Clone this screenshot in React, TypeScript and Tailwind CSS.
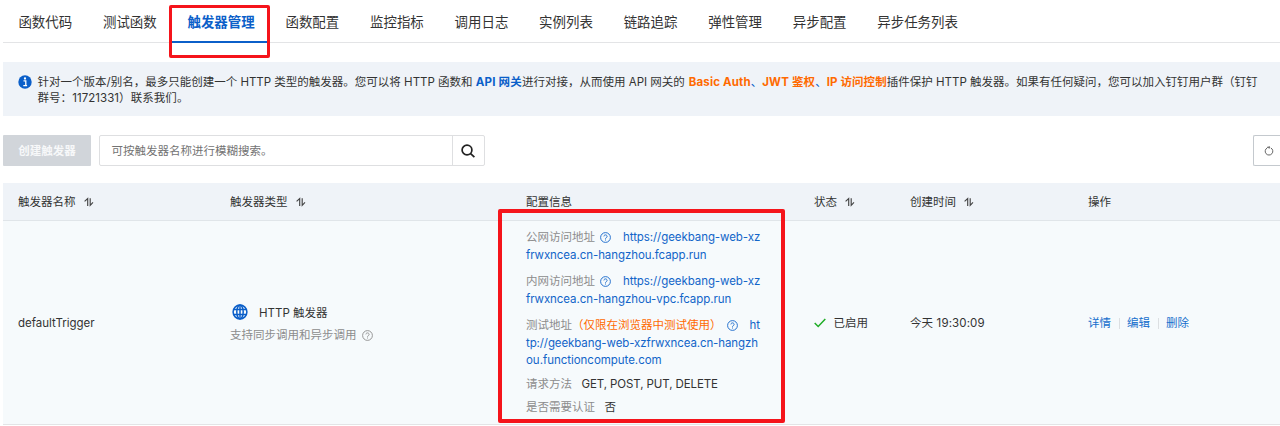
import type { ReactNode } from "react";

function Sort() {
  return (
    <svg width="10" height="10" viewBox="0 0 10 10" className="mb-px ml-[8px] shrink-0" fill="none" stroke="#444" strokeWidth="1.15">
      <path d="M0.6 4.4 3.7 1.6V9M6.2 1.2V8.4L9 5.4" />
    </svg>
  );
}

function Help({ className }: { className: string }) {
  return (
    <svg width="11" height="11" viewBox="0 0 11 11" className={className} fill="none" stroke="currentColor" strokeWidth="0.9">
      <circle cx="5.5" cy="5.5" r="4.9" />
      <path d="M3.9 4.4a1.6 1.5 0 1 1 2.4 1.3c-.5.3-.8.5-.8 1.1M5.5 7.5v1" />
    </svg>
  );
}

function Label({ children }: { children: ReactNode }) {
  return <span className="tracking-normal text-[#8c8c8c]">{children}</span>;
}

const tabsBefore = ["函数代码", "测试函数"];
const tabsAfter = ["函数配置", "监控指标", "调用日志", "实例列表", "链路追踪", "弹性管理", "异步配置", "异步任务列表"];

function Tab({ children }: { children: ReactNode }) {
  return <div className="h-full px-[15.4px]">{children}</div>;
}

function Line({ children }: { children: ReactNode }) {
  return <div className="flex h-[17.5px] items-center whitespace-pre">{children}</div>;
}

export default function App() {
  return (
    <div className="relative h-[426px] w-[1280px] overflow-hidden bg-white pl-[3px] font-['Inter','Noto_Sans_CJK_SC',sans-serif] text-[11.5px] text-[#333]">
      <nav className="flex h-[43px] whitespace-nowrap border-b border-[#e3e4e6] text-[13.45px] leading-[44px]">
        {tabsBefore.map((t) => <Tab key={t}>{t}</Tab>)}
        <div className="h-[43px] border-b-2 border-[#0b5fc9] px-[15.4px] font-bold text-[#0b5fc9]">触发器管理</div>
        {tabsAfter.map((t) => <Tab key={t}>{t}</Tab>)}
      </nav>

      <section className="mt-[19px] flex h-[54px] bg-[#eff3f8] pl-[15px] pt-[13px] leading-[15.5px]">
        <svg width="14" height="14" viewBox="0 0 14 14" className="shrink-0">
          <circle cx="7" cy="7" r="6.7" fill="#0b5fc9" />
          <circle cx="7" cy="3.5" r="1.15" fill="white" />
          <path d="M5.5 5.8h2.3v5.2M5.3 10.7h3.8" stroke="white" strokeWidth="1.3" fill="none" />
        </svg>
        <div className="ml-[5.5px] whitespace-nowrap">
          <div>
            针对一个版本/别名，最多只能创建一个 HTTP 类型的触发器。您可以将 HTTP 函数和 <b className="tracking-[0.2px] text-[#0b5fc9]">API 网关</b>进行对接，从而使用 API 网关的 <b className="ml-[0.7px] tracking-[0.15px] text-[#ff6a00]">Basic Auth</b><span className="text-[#0b5fc9]">、</span><b className="tracking-[0.15px] text-[#ff6a00]">JWT 鉴权</b><span className="text-[#0b5fc9]">、</span><b className="tracking-[0.1px] text-[#ff6a00]">IP 访问控制</b>插件保护 HTTP 触发器。如果有任何疑问，您可以加入钉钉用户群（钉钉
          </div>
          <div><span className="tracking-[0.06px]">群号：11721331）联系我们。</span></div>
        </div>
      </section>

      <section className="mt-[19px] flex h-[31px]">
        <button className="w-[88px] rounded-[1px] bg-[#d1d5da] pt-[2px] font-bold text-[#f7f8f9]">创建触发器</button>
        <div className="ml-[8px] flex w-[386px] rounded-[2px] border border-[#dedfe1]">
          <div className="flex flex-1 items-center pl-[11.5px] pt-[2px] text-[#737373]">可按触发器名称进行模糊搜索。</div>
          <div className="flex w-[32px] items-center justify-center border-l border-[#dedfe1] pr-px">
            <svg width="14" height="14" viewBox="0 0 14 14" fill="none" stroke="#222" strokeWidth="1.7">
              <circle cx="6" cy="6" r="4.9" />
              <path d="m9.6 9.6 3.8 3.6" />
            </svg>
          </div>
        </div>
        <div className="ml-auto flex w-[27px] items-center rounded-l-[2px] border border-r-0 border-[#c4c9ce] pl-[10px]">
          <svg width="10" height="10" viewBox="0 0 10 10" fill="none" stroke="#555" strokeWidth="0.9">
            <path d="M6.8 1.9a3.8 3.8 0 1 1-3.6 0M3 1.3h2.6M5.2.2v2.4" />
          </svg>
        </div>
      </section>

      <section className="mt-[17px]">
        <div className="grid h-[38px] grid-cols-[212px_296px_288px_96px_178px_1fr] items-center border-b border-[#e0e5e9] bg-[#eff3f8] pl-[15px] pt-[2px]">
          <div className="flex items-center">触发器名称<Sort /></div>
          <div className="flex items-center">触发器类型<Sort /></div>
          <div>配置信息</div>
          <div className="flex items-center">状态<Sort /></div>
          <div className="flex items-center">创建时间<Sort /></div>
          <div>操作</div>
        </div>
        <div className="grid h-[204px] grid-cols-[212px_296px_288px_96px_178px_1fr] items-center border-b border-[#e3e4e6] bg-[#f6fafc] pl-[15px] pt-[2px]">
          <div>defaultTrigger</div>
          <div className="pt-[2px]">
            <div className="flex h-[22px] items-center">
              <svg width="16" height="16" viewBox="0 0 16 16" fill="none" stroke="#0b5fc9" strokeWidth="1.5" className="mb-[3px] ml-[1.5px]">
                <circle cx="8" cy="8" r="6.9" />
                <ellipse cx="8" cy="8" rx="3.2" ry="6.9" />
                <path d="M8 1v14M1.6 5.6h12.8M1.6 10.4h12.8" />
              </svg>
              <span className="ml-[11.5px]">HTTP 触发器</span>
            </div>
            <div className="flex h-[22px] items-center text-[#8c8c8c]">支持同步调用和异步调用<Help className="ml-[5px]" /></div>
          </div>
          <div className="self-start pt-[6px] tracking-[-0.07px] text-[#1265c9]">
            <Line><Label>公网访问地址</Label><Help className="ml-[5px] mr-[12px]" />https://geekbang-web-xz</Line>
            <Line>frwxncea.cn-hangzhou.fcapp.run</Line>
            <div className="h-[9px]" />
            <Line><Label>内网访问地址</Label><Help className="ml-[5px] mr-[12px]" />https://geekbang-web-xz</Line>
            <Line>frwxncea.cn-hangzhou-vpc.fcapp.run</Line>
            <div className="h-[9px]" />
            <Line><Label>测试地址</Label><span className="tracking-normal text-[#ff6a00]">（仅限在浏览器中测试使用）</span><Help className="ml-[5px] mr-[12px]" />ht</Line>
            <Line><span className="tracking-[-0.1px]">tp://geekbang-web-xzfrwxncea.cn-hangzh</span></Line>
            <Line><span className="tracking-[-0.03px]">ou.functioncompute.com</span></Line>
            <div className="h-[6px]" />
            <Line><Label>请求方法</Label><span className="ml-[9.5px] tracking-[-0.1px] text-[#333]">GET, POST, PUT, DELETE</span></Line>
            <div className="h-[6px]" />
            <Line><Label>是否需要认证</Label><span className="ml-[9.5px] text-[#333]">否</span></Line>
          </div>
          <div className="flex items-center">
            <svg width="12" height="10" viewBox="0 0 12 10" fill="none" stroke="#1fad26" strokeWidth="1.5" className="mb-px"><path d="m.7 5 3.5 3.5L11.3 1" /></svg>
            <span className="ml-[7.5px]">已启用</span>
          </div>
          <div className="tracking-[0.12px]">今天 19:30:09</div>
          <div className="flex items-center text-[#1670cd]">
            详情<i className="mx-[7.5px] h-[11px] w-px bg-[#dcdfe2]" />编辑<i className="mx-[7.5px] h-[11px] w-px bg-[#dcdfe2]" />删除
          </div>
        </div>
      </section>

      <div className="absolute left-[169px] top-[5px] h-[53px] w-[101px] rounded-[2px] border-[3px] border-[#f5141b]" />
      <div className="absolute left-[498px] top-[209px] h-[214px] w-[287px] rounded-[2px] border-4 border-[#f5141b]" />
    </div>
  );
}
